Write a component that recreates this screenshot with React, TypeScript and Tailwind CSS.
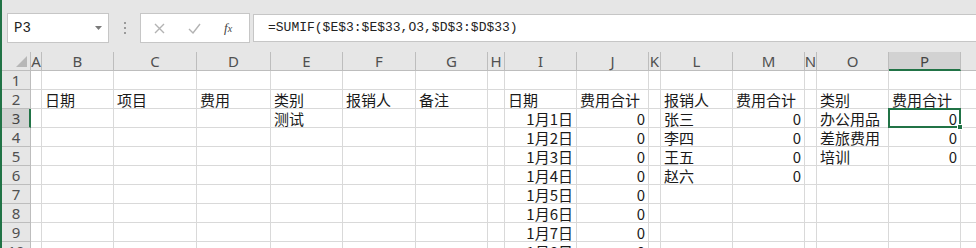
import React from "react";

type Col = { k: string; w: number };
const cols: Col[] = [
  { k: "A", w: 11 },
  { k: "B", w: 72 },
  { k: "C", w: 83 },
  { k: "D", w: 74 },
  { k: "E", w: 72 },
  { k: "F", w: 73 },
  { k: "G", w: 72 },
  { k: "H", w: 17 },
  { k: "I", w: 72 },
  { k: "J", w: 72 },
  { k: "K", w: 12 },
  { k: "L", w: 72 },
  { k: "M", w: 72 },
  { k: "N", w: 12 },
  { k: "O", w: 72 },
  { k: "P", w: 72 },
  { k: "Q", w: 72 },
];

type CellVal = { t: string; r?: boolean };
const data: Record<number, Record<string, CellVal>> = {
  2: {
    B: { t: "日期" },
    C: { t: "项目" },
    D: { t: "费用" },
    E: { t: "类别" },
    F: { t: "报销人" },
    G: { t: "备注" },
    I: { t: "日期" },
    J: { t: "费用合计" },
    L: { t: "报销人" },
    M: { t: "费用合计" },
    O: { t: "类别" },
    P: { t: "费用合计" },
  },
  3: {
    E: { t: "测试" },
    I: { t: "1月1日", r: true },
    J: { t: "0", r: true },
    L: { t: "张三" },
    M: { t: "0", r: true },
    O: { t: "办公用品" },
    P: { t: "0", r: true },
  },
  4: {
    I: { t: "1月2日", r: true },
    J: { t: "0", r: true },
    L: { t: "李四" },
    M: { t: "0", r: true },
    O: { t: "差旅费用" },
    P: { t: "0", r: true },
  },
  5: {
    I: { t: "1月3日", r: true },
    J: { t: "0", r: true },
    L: { t: "王五" },
    M: { t: "0", r: true },
    O: { t: "培训" },
    P: { t: "0", r: true },
  },
  6: {
    I: { t: "1月4日", r: true },
    J: { t: "0", r: true },
    L: { t: "赵六" },
    M: { t: "0", r: true },
  },
  7: { I: { t: "1月5日", r: true }, J: { t: "0", r: true } },
  8: { I: { t: "1月6日", r: true }, J: { t: "0", r: true } },
  9: { I: { t: "1月7日", r: true }, J: { t: "0", r: true } },
  10: { I: { t: "1月8日", r: true }, J: { t: "0", r: true } },
};

const cellFont = { fontFamily: '"Noto Sans CJK SC", "Noto Sans", sans-serif' };
const hdrFont = { fontFamily: '"Noto Sans", "Noto Sans CJK SC", sans-serif' };
const monoFont = { fontFamily: '"Liberation Mono", "Noto Sans CJK SC", monospace' };

function Toolbar() {
  return (
    <div className="flex h-[52px] shrink-0 items-start bg-[#e6e6e6] pt-[13px]">
      {/* Name box */}
      <div className="ml-[5px] flex h-[30px] w-[102px] items-center justify-between border border-[#c6c6c6] bg-white pl-[6px] pr-[6px]">
        <span className="text-[14px] text-[#222]" style={monoFont}>
          P3
        </span>
        <svg width="7" height="4" viewBox="0 0 7 4">
          <path d="M0 0 L7 0 L3.5 4 Z" fill="#7a7a7a" />
        </svg>
      </div>
      {/* dots */}
      <div className="flex h-[30px] w-[31px] flex-col items-center justify-center gap-[3px]">
        <div className="h-[2px] w-[2px] bg-[#9a9a9a]" />
        <div className="h-[2px] w-[2px] bg-[#9a9a9a]" />
        <div className="h-[2px] w-[2px] bg-[#9a9a9a]" />
      </div>
      {/* fx box */}
      <div className="flex h-[30px] w-[110px] items-center border border-[#c6c6c6] bg-white">
        <svg className="ml-[13px]" width="11" height="11" viewBox="0 0 11 11">
          <path d="M1 1 L10 10 M10 1 L1 10" stroke="#b3b3b3" strokeWidth="1.4" />
        </svg>
        <svg className="ml-[23px]" width="13" height="11" viewBox="0 0 13 11">
          <path d="M1 6 L5 10 L12 1" stroke="#b3b3b3" strokeWidth="1.4" fill="none" />
        </svg>
        <span
          className="ml-[23px] text-[13px] italic text-[#444]"
          style={{ fontFamily: '"Liberation Serif", serif' }}
        >
          f<span className="text-[10px]">x</span>
        </span>
      </div>
      {/* formula */}
      <div className="ml-[3px] mt-[1px] flex h-[28px] flex-1 items-center border-y border-l border-[#c6c6c6] bg-white pl-[14px]">
        <span className="whitespace-pre text-[13px] text-[#222]" style={monoFont}>
          =SUMIF($E$3:$E$33,O3,$D$3:$D$33)
        </span>
      </div>
    </div>
  );
}

function HeaderRow() {
  return (
    <div className="flex h-[19px] shrink-0 bg-[#e6e6e6]">
      <div className="relative w-[29px] shrink-0 border-b border-r border-[#bdbdbd]">
        <svg className="absolute right-[3px] bottom-[3px]" width="11" height="11" viewBox="0 0 11 11">
          <path d="M11 0 L11 11 L0 11 Z" fill="#b7b7b7" />
        </svg>
      </div>
      {cols.map((c) => {
        const sel = c.k === "P";
        return (
          <div
            key={c.k}
            className={
              sel
                ? "flex shrink-0 items-center justify-center border-r border-b-2 border-r-[#bdbdbd] border-b-[#217346] bg-[#d2d2d2] pt-[1px] text-[15px] leading-none text-[#444]"
                : "flex shrink-0 items-center justify-center border-r border-b border-[#bdbdbd] text-[15px] leading-none text-[#505050]"
            }
            style={{ width: c.w, ...hdrFont }}
          >
            {c.k}
          </div>
        );
      })}
    </div>
  );
}

function Row({ n }: { n: number }) {
  const sel = n === 3;
  const rd = data[n] || {};
  return (
    <div className="flex h-[19px] shrink-0">
      <div
        className={
          sel
            ? "flex w-[29px] shrink-0 items-center justify-center border-b border-r-2 border-b-[#bdbdbd] border-r-[#217346] bg-[#d2d2d2] pl-[1px] text-[15px] leading-none text-[#444]"
            : "flex w-[29px] shrink-0 items-center justify-center border-b border-r border-[#bdbdbd] bg-[#e6e6e6] text-[15px] leading-none text-[#505050]"
        }
        style={hdrFont}
      >
        {n}
      </div>
      {cols.map((c) => {
        const v = rd[c.k];
        const active = sel && c.k === "P";
        return (
          <div
            key={c.k}
            className={
              "relative flex shrink-0 items-center overflow-visible whitespace-nowrap border-b border-r border-[#d9d9d9] bg-white pt-[1px] text-[15px] leading-none text-[#1a1a1a] " +
              (v && v.r ? "justify-end pr-[3px]" : "justify-start pl-[3px]")
            }
            style={{ width: c.w, ...cellFont }}
          >
            {v ? <span className="relative z-10">{v.t}</span> : null}
            {active ? (
              <>
                <div className="pointer-events-none absolute -left-[1px] -top-[1px] z-20 h-[20px] w-[73px] border-2 border-[#217346]" />
                <div className="absolute -bottom-[3px] -right-[3px] z-30 h-[6px] w-[6px] border border-white bg-[#217346]" />
              </>
            ) : null}
          </div>
        );
      })}
    </div>
  );
}

export default function App() {
  const rows = [1, 2, 3, 4, 5, 6, 7, 8, 9, 10];
  return (
    <div className="flex h-[248px] w-[976px] flex-col overflow-hidden border-l-2 border-[#217346] bg-white">
      <Toolbar />
      <HeaderRow />
      {rows.map((n) => (
        <Row key={n} n={n} />
      ))}
    </div>
  );
}
